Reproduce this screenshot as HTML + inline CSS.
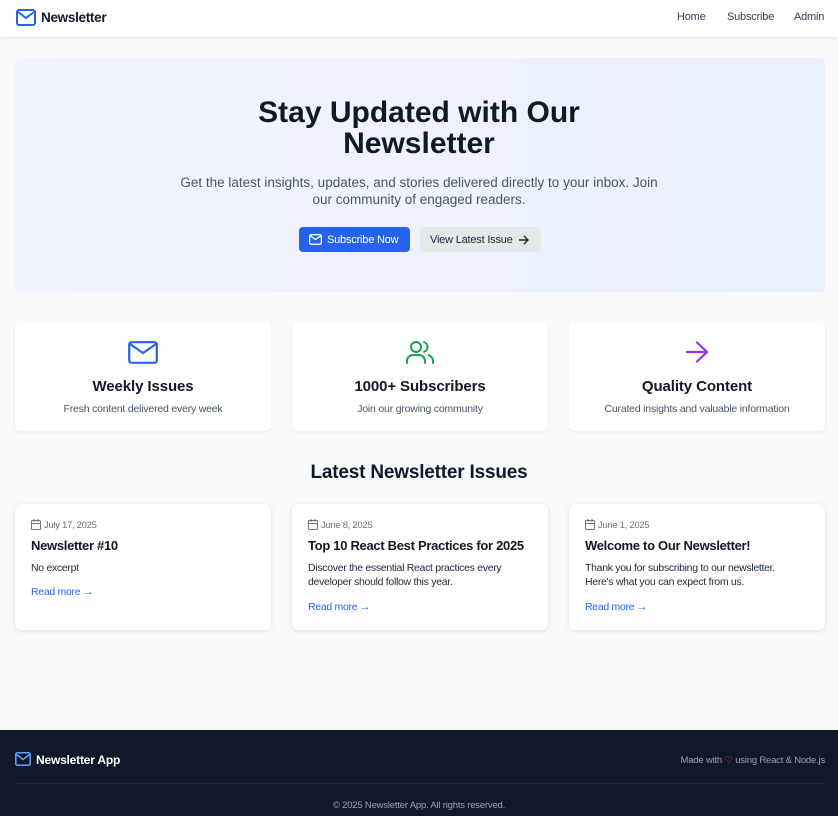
<!DOCTYPE html>
<html><head><meta charset="utf-8"><style>
*{box-sizing:border-box;margin:0;padding:0}
body{width:838px;height:816px;background:#f8fafc;font-family:"Liberation Sans",sans-serif;color:#111827;position:relative;overflow:hidden}
.hdr{position:absolute;left:0;top:0;width:838px;height:37px;background:#fff;box-shadow:0 1px 3px rgba(0,0,0,.12)}
.abs{position:absolute}
.hero{left:15px;top:58px;width:810px;height:234px;border-radius:6px;background:linear-gradient(90deg,#f1f5fd,#eaf0fd)}
.c{text-align:center}
.card{background:#fff;border-radius:6px;box-shadow:0 1px 3px rgba(0,0,0,.08)}
.ft{font-weight:bold;font-size:15px;letter-spacing:-.1px}
.fd{font-size:10.5px;color:#4b5563;letter-spacing:-.2px}
.date{font-size:9.5px;color:#6b7280;letter-spacing:-.3px}
.it{font-size:13px;font-weight:bold;letter-spacing:-.3px}
.ex{font-size:10.5px;line-height:14px;color:#1f2937;letter-spacing:-.3px}
.rm{font-size:10.5px;color:#2563eb;letter-spacing:-.3px}
.btn{display:flex;align-items:center;border-radius:4px;font-size:11px;letter-spacing:-.2px;height:25px}
</style></head><body>
<div class="hdr">
 <svg class="abs" style="left:16px;top:9px" width="20" height="17" viewBox="0 0 20 17"><rect x="1" y="1" width="18" height="15" rx="2" fill="none" stroke="#2563eb" stroke-width="2"/><path d="M2 3l8 6 8-6" fill="none" stroke="#2563eb" stroke-width="2"/></svg>
 <div class="abs" style="left:41px;top:10px;font-size:13.5px;font-weight:bold;letter-spacing:-.3px">Newsletter</div>
 <div class="abs" style="left:677px;top:11px;font-size:11px;color:#374151;letter-spacing:-.2px">Home</div>
 <div class="abs" style="left:727px;top:11px;font-size:11px;color:#374151;letter-spacing:-.2px">Subscribe</div>
 <div class="abs" style="left:794px;top:11px;font-size:11px;color:#374151;letter-spacing:-.2px">Admin</div>
</div>
<div class="abs hero"></div>
<div class="abs c" style="left:0;width:838px;top:97px;font-size:30px;line-height:31px;font-weight:bold;letter-spacing:0">Stay Updated with Our<br>Newsletter</div>
<div class="abs c" style="left:0;width:838px;top:175px;font-size:13.5px;line-height:16.5px;color:#4b5563;letter-spacing:0">Get the latest insights, updates, and stories delivered directly to your inbox. Join<br>our community of engaged readers.</div>
<div class="abs btn" style="left:299px;top:227px;width:111px;background:#2563eb;color:#fff;padding-left:28px">Subscribe Now
 <svg class="abs" style="left:10px;top:7px" width="13" height="11" viewBox="0 0 13 11"><rect x=".7" y=".7" width="11.6" height="9.6" rx="1.5" fill="none" stroke="#fff" stroke-width="1.3"/><path d="M1.5 2l5 3.5 5-3.5" fill="none" stroke="#fff" stroke-width="1.3"/></svg></div>
<div class="abs btn" style="left:420px;top:227px;width:121px;background:#e5e7eb;color:#1f2937;padding-left:10px">View Latest Issue
 <svg class="abs" style="left:98px;top:8px" width="11" height="10" viewBox="0 0 11 10"><path d="M1 5h9M6 1l4 4-4 4" fill="none" stroke="#1f2937" stroke-width="1.4"/></svg></div>

<div class="abs card" style="left:15px;top:322px;width:256px;height:109px"></div>
<div class="abs card" style="left:292px;top:322px;width:256px;height:109px"></div>
<div class="abs card" style="left:569px;top:322px;width:256px;height:109px"></div>
<svg class="abs" style="left:128px;top:341px" width="30" height="23" viewBox="0 0 30 23"><rect x="1.2" y="1.2" width="27.6" height="20.6" rx="2.5" fill="none" stroke="#2563eb" stroke-width="2.2"/><path d="M2 3l13 9 13-9" fill="none" stroke="#2563eb" stroke-width="2.2"/></svg>
<svg class="abs" style="left:405px;top:339px" width="30" height="26" viewBox="0 0 30 26"><g fill="none" stroke="#16a34a" stroke-width="2" stroke-linecap="round"><circle cx="11" cy="8" r="5"/><path d="M2 24v-2a6 6 0 0 1 6-6h6a6 6 0 0 1 6 6v2"/><path d="M19 3.2a5 5 0 0 1 0 9.6"/><path d="M28 24v-2a6 6 0 0 0-4.5-5.8"/></g></svg>
<svg class="abs" style="left:685px;top:341px" width="24" height="22" viewBox="0 0 24 22"><path d="M2 11h20M12 1.5l10 9.5-10 9.5" fill="none" stroke="#9333ea" stroke-width="2.2" stroke-linecap="round" stroke-linejoin="round"/></svg>
<div class="abs c ft" style="left:15px;width:256px;top:378px">Weekly Issues</div>
<div class="abs c ft" style="left:292px;width:256px;top:378px">1000+ Subscribers</div>
<div class="abs c ft" style="left:569px;width:256px;top:378px">Quality Content</div>
<div class="abs c fd" style="left:15px;width:256px;top:403px">Fresh content delivered every week</div>
<div class="abs c fd" style="left:292px;width:256px;top:403px">Join our growing community</div>
<div class="abs c fd" style="left:569px;width:256px;top:403px">Curated insights and valuable information</div>

<div class="abs c" style="left:0;width:838px;top:462px;font-size:19px;font-weight:bold;letter-spacing:-.2px">Latest Newsletter Issues</div>

<div class="abs card" style="left:15px;top:504px;width:256px;height:126px;box-shadow:0 1px 4px rgba(0,0,0,.12)"></div>
<div class="abs card" style="left:292px;top:504px;width:256px;height:126px;box-shadow:0 1px 4px rgba(0,0,0,.12)"></div>
<div class="abs card" style="left:569px;top:504px;width:256px;height:126px;box-shadow:0 1px 4px rgba(0,0,0,.12)"></div>

<svg class="abs" style="left:31px;top:519px" width="10" height="11" viewBox="0 0 10 11"><rect x=".5" y="1.5" width="9" height="9" rx="1" fill="none" stroke="#6b7280"/><path d="M.5 4.5h9M3 0v3M7 0v3" stroke="#6b7280"/></svg>
<div class="abs date" style="left:44px;top:520px">July 17, 2025</div>
<div class="abs it" style="left:31px;top:538px">Newsletter #10</div>
<div class="abs ex" style="left:31px;top:561px">No excerpt</div>
<div class="abs rm" style="left:31px;top:586px">Read more →</div>

<svg class="abs" style="left:308px;top:519px" width="10" height="11" viewBox="0 0 10 11"><rect x=".5" y="1.5" width="9" height="9" rx="1" fill="none" stroke="#6b7280"/><path d="M.5 4.5h9M3 0v3M7 0v3" stroke="#6b7280"/></svg>
<div class="abs date" style="left:321px;top:520px">June 8, 2025</div>
<div class="abs it" style="left:308px;top:538px">Top 10 React Best Practices for 2025</div>
<div class="abs ex" style="left:308px;top:561px">Discover the essential React practices every<br>developer should follow this year.</div>
<div class="abs rm" style="left:308px;top:601px">Read more →</div>

<svg class="abs" style="left:585px;top:519px" width="10" height="11" viewBox="0 0 10 11"><rect x=".5" y="1.5" width="9" height="9" rx="1" fill="none" stroke="#6b7280"/><path d="M.5 4.5h9M3 0v3M7 0v3" stroke="#6b7280"/></svg>
<div class="abs date" style="left:598px;top:520px">June 1, 2025</div>
<div class="abs it" style="left:585px;top:538px">Welcome to Our Newsletter!</div>
<div class="abs ex" style="left:585px;top:561px">Thank you for subscribing to our newsletter.<br>Here's what you can expect from us.</div>
<div class="abs rm" style="left:585px;top:601px">Read more →</div>

<div class="abs" style="left:0;top:730px;width:838px;height:86px;background:#111827">
 <svg class="abs" style="left:15px;top:22px" width="16" height="14" viewBox="0 0 16 14"><rect x=".8" y=".8" width="14.4" height="12.4" rx="1.5" fill="none" stroke="#60a5fa" stroke-width="1.5"/><path d="M1.5 2.5l6.5 5 6.5-5" fill="none" stroke="#60a5fa" stroke-width="1.5"/></svg>
 <div class="abs" style="left:36px;top:23px;color:#fff;font-size:12px;font-weight:bold;letter-spacing:-.2px">Newsletter App</div>
 <div class="abs" style="right:13px;top:25px;color:#9ca3af;font-size:9.5px;letter-spacing:-.2px">Made with <span style="color:#ef4444">♡</span> using React &amp; Node.js</div>
 <div class="abs" style="left:15px;top:53px;width:810px;height:1px;background:#1f2937"></div>
 <div class="abs c" style="left:0;width:838px;top:70px;color:#9ca3af;font-size:9.5px;letter-spacing:-.2px">© 2025 Newsletter App. All rights reserved.</div>
</div>
</body></html>
